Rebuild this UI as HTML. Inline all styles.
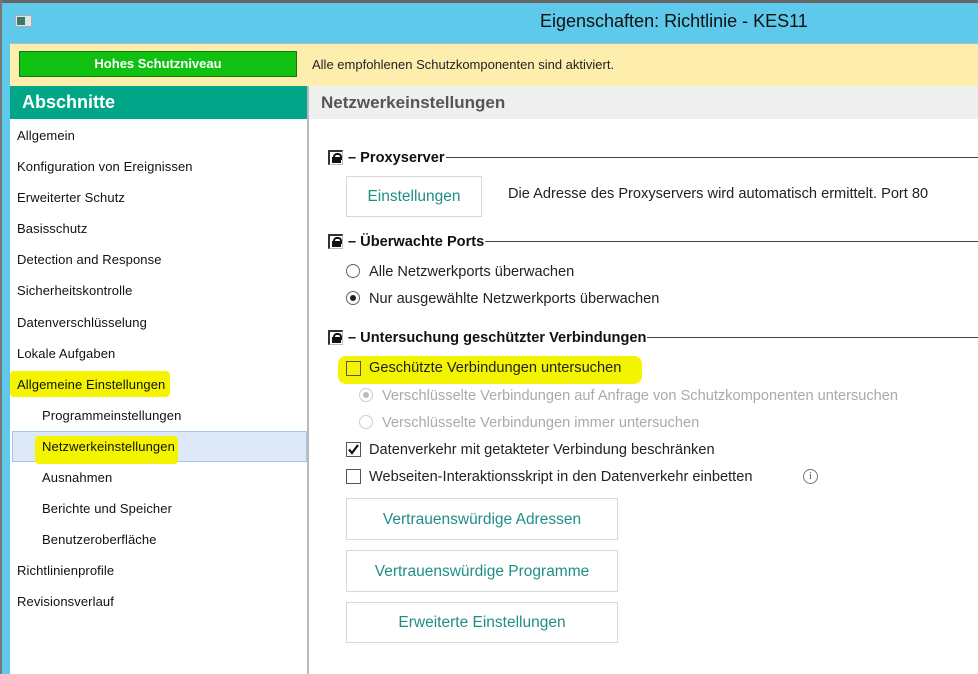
<!DOCTYPE html>
<html><head><meta charset="utf-8"><style>
*{margin:0;padding:0;box-sizing:border-box}
body{width:978px;height:674px;overflow:hidden;background:#5ec9ea;font-family:"Liberation Sans","DejaVu Sans",sans-serif;position:relative}
.a{position:absolute;white-space:nowrap}
.side{font-size:13px;color:#111;letter-spacing:0.1px}
.r{font-size:14.6px;color:#222}
.btn{position:absolute;border:1px solid #d8d8d8;background:#fff;color:#1f8f86;font-size:15.5px;text-align:center}
.hd{position:absolute;left:348px;right:0;display:flex;align-items:center;font-size:14.6px;font-weight:bold;color:#111;white-space:nowrap}
.hd:after{content:"";flex:1;height:1px;background:#444;margin-left:1px}
.lock{position:absolute;width:15px;height:15px;border-left:2px solid #333;border-top:2px solid #333;border-right:1px solid #bbb;border-bottom:1px solid #bbb;background:#fff}
.lock:after{content:"";position:absolute;left:2px;top:5px;width:9px;height:6px;background:#111}
.lock:before{content:"";position:absolute;left:3px;top:1px;width:5px;height:5px;border:2px solid #111;border-bottom:none;border-radius:4px 4px 0 0}
.cb{position:absolute;width:15px;height:15px;border:1px solid #555;background:#fff}
.rd{position:absolute;width:14px;height:14px;border:1px solid #666;border-radius:50%;background:#fff}
.hl{position:absolute;background:#f4f400;border-radius:4px}
</style></head><body>
<div class="a" style="left:0;top:0;width:978px;height:3px;background:#666"></div>
<div class="a" style="left:0;top:0;width:2px;height:674px;background:#777"></div>
<div class="a" style="left:15px;top:15px;width:17px;height:12px;background:#dfe6e8;border:1px solid #aab"></div>
<div class="a" style="left:17px;top:17px;width:8px;height:8px;background:#3a7a60"></div>
<div class="a" style="left:540px;top:11px;font-size:18px;color:#111">Eigenschaften: Richtlinie - KES11</div>
<div class="a" style="left:10px;top:43px;width:968px;height:43px;background:#feeeae;border-top:1px solid #bbb"></div>
<div class="a" style="left:19px;top:51px;width:278px;height:26px;background:#11c111;border:1px solid #0a7a0a;color:#fff;font-weight:bold;font-size:13px;text-align:center;line-height:24px">Hohes Schutzniveau</div>
<div class="a" style="left:312px;top:57px;font-size:13px;color:#222">Alle empfohlenen Schutzkomponenten sind aktiviert.</div>
<div class="a" style="left:10px;top:86px;width:968px;height:588px;background:#fff"></div>
<div class="a" style="left:10px;top:86px;width:297px;height:33px;background:#00a687;color:#fff;font-weight:bold;font-size:18px;padding:6px 0 0 12px">Abschnitte</div>
<div class="a" style="left:307px;top:86px;width:2px;height:588px;background:#bbb"></div>
<div class="a" style="left:309px;top:86px;width:669px;height:33px;background:#efefef;color:#555;font-weight:bold;font-size:17px;padding:7px 0 0 12px">Netzwerkeinstellungen</div>
<div class="hl" style="left:10px;top:371px;width:160px;height:26px"></div>
<div class="a" style="left:12px;top:431px;width:295px;height:31px;background:#dde9f9;border:1px solid #aac4e8"></div>
<div class="hl" style="left:35px;top:436px;width:143px;height:28px"></div>
<div class="a side" style="left:17px;top:128px">Allgemein</div>
<div class="a side" style="left:17px;top:159px">Konfiguration von Ereignissen</div>
<div class="a side" style="left:17px;top:190px">Erweiterter Schutz</div>
<div class="a side" style="left:17px;top:221px">Basisschutz</div>
<div class="a side" style="left:17px;top:252px">Detection and Response</div>
<div class="a side" style="left:17px;top:283px">Sicherheitskontrolle</div>
<div class="a side" style="left:17px;top:315px">Datenverschlüsselung</div>
<div class="a side" style="left:17px;top:346px">Lokale Aufgaben</div>
<div class="a side" style="left:17px;top:377px">Allgemeine Einstellungen</div>
<div class="a side" style="left:42px;top:408px">Programmeinstellungen</div>
<div class="a side" style="left:42px;top:439px">Netzwerkeinstellungen</div>
<div class="a side" style="left:42px;top:470px">Ausnahmen</div>
<div class="a side" style="left:42px;top:501px">Berichte und Speicher</div>
<div class="a side" style="left:42px;top:532px">Benutzeroberfläche</div>
<div class="a side" style="left:17px;top:563px">Richtlinienprofile</div>
<div class="a side" style="left:17px;top:594px">Revisionsverlauf</div>

<div class="lock" style="left:328px;top:150px"></div>
<div class="hd" style="top:149px;height:17px">– Proxyserver</div>
<div class="btn" style="left:346px;top:176px;width:136px;height:41px;line-height:40px">Einstellungen</div>
<div class="a r" style="left:508px;top:186px">Die Adresse des Proxyservers wird automatisch ermittelt. Port 80</div>

<div class="lock" style="left:328px;top:234px"></div>
<div class="hd" style="top:233px;height:17px">– Überwachte Ports</div>
<div class="rd" style="left:346px;top:264px"></div>
<div class="a r" style="left:369px;top:264px">Alle Netzwerkports überwachen</div>
<div class="rd" style="left:346px;top:291px"></div>
<div class="a" style="left:350px;top:295px;width:6px;height:6px;border-radius:50%;background:#222"></div>
<div class="a r" style="left:369px;top:291px">Nur ausgewählte Netzwerkports überwachen</div>

<div class="lock" style="left:328px;top:330px"></div>
<div class="hd" style="top:329px;height:17px">– Untersuchung geschützter Verbindungen</div>
<div class="hl" style="left:338px;top:356px;width:304px;height:28px;border-radius:8px"></div>
<div class="cb" style="left:346px;top:361px;background:transparent"></div>
<div class="a r" style="left:369px;top:360px">Geschützte Verbindungen untersuchen</div>
<div class="rd" style="left:359px;top:388px;border-color:#ccc"></div>
<div class="a" style="left:363px;top:392px;width:6px;height:6px;border-radius:50%;background:#bbb"></div>
<div class="a r" style="left:382px;top:388px;color:#aaa">Verschlüsselte Verbindungen auf Anfrage von Schutzkomponenten untersuchen</div>
<div class="rd" style="left:359px;top:415px;border-color:#ccc"></div>
<div class="a r" style="left:382px;top:415px;color:#aaa">Verschlüsselte Verbindungen immer untersuchen</div>
<div class="cb" style="left:346px;top:442px"></div>
<svg class="a" style="left:346px;top:442px" width="15" height="15"><path d="M3 7.5 L6 11 L12 3" stroke="#111" stroke-width="2.2" fill="none"/></svg>
<div class="a r" style="left:369px;top:442px">Datenverkehr mit getakteter Verbindung beschränken</div>
<div class="cb" style="left:346px;top:469px"></div>
<div class="a r" style="left:369px;top:469px">Webseiten-Interaktionsskript in den Datenverkehr einbetten</div>
<div class="a" style="left:803px;top:469px;width:15px;height:15px;border:1px solid #777;border-radius:50%;font-size:10px;color:#555;text-align:center;line-height:13px;font-family:'Liberation Serif',serif">i</div>

<div class="btn" style="left:346px;top:498px;width:272px;height:42px;line-height:41px">Vertrauenswürdige Adressen</div>
<div class="btn" style="left:346px;top:550px;width:272px;height:42px;line-height:41px">Vertrauenswürdige Programme</div>
<div class="btn" style="left:346px;top:602px;width:272px;height:41px;line-height:40px">Erweiterte Einstellungen</div>
</body></html>
